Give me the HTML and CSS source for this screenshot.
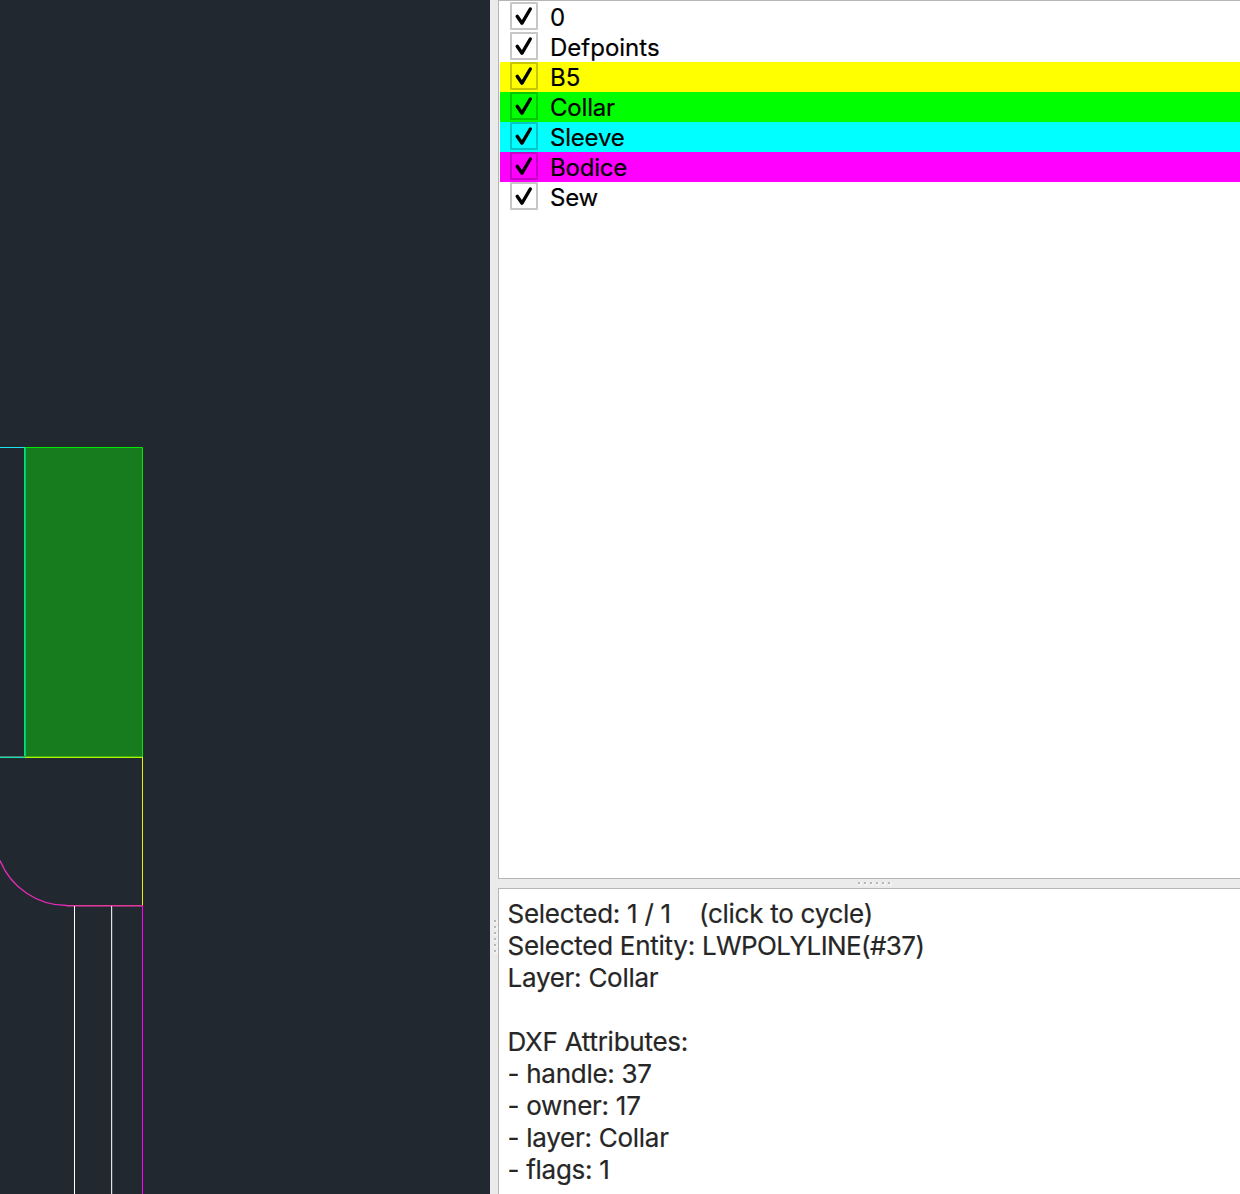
FILE: index.html
```html
<!DOCTYPE html>
<html lang="en">
<head>
<meta charset="utf-8">
<title>CAD Viewer</title>
<link rel="stylesheet" href="styles.css">
</head>
<body>
<main class="window">
  <svg class="canvas" viewBox="0 0 490 1194" fill="none">
    <rect x="25" y="448" width="118" height="309" fill="#167c1e"/>
    <path d="M0 447.5H25" stroke="#1ce5f3"/>
    <path d="M25 447.5H142.5V757" stroke="#00ea08"/>
    <path d="M24.5 448V757" stroke="#00e087"/>
    <path d="M25.5 448V757" stroke="#00c864"/>
    <path d="M0 756.5H25" stroke="#477f6e"/>
    <path d="M0 757.5H25" stroke="#18e1b4"/>
    <path d="M25 756.5H142" stroke="#3fa916"/>
    <path d="M25 757.5H142" stroke="#aef500"/>
    <path d="M142.5 757V905" stroke="#eeee00"/>
    <path d="M0 860.5A72.4 72.4 0 0 0 67 905.5" stroke="#e62bb6" stroke-width="1.3"/>
    <path d="M67 905.5H143" stroke="#e4369b"/>
    <path d="M67 906.5H143" stroke="#85336f"/>
    <path d="M74.5 906V1194" stroke="#fff"/>
    <path d="M111.5 906V1194" stroke="#e0e1e2"/>
    <path d="M112.5 906V1194" stroke="#474c52"/>
    <path d="M142.5 906V1194" stroke="#f0f"/>
  </svg>
  <div class="splitter splitter-v"><i></i><i></i><i></i><i></i><i></i><i></i></div>
  <div class="side">
    <ul class="layers">
      <li class="layer"><span class="check"><svg viewBox="0 0 28 28"><path d="M7.2 14.3L12 21.2L20.3 7"/></svg></span><span class="name">0</span></li>
      <li class="layer"><span class="check"><svg viewBox="0 0 28 28"><path d="M7.2 14.3L12 21.2L20.3 7"/></svg></span><span class="name">Defpoints</span></li>
      <li class="layer yellow"><span class="check"><svg viewBox="0 0 28 28"><path d="M7.2 14.3L12 21.2L20.3 7"/></svg></span><span class="name">B5</span></li>
      <li class="layer green"><span class="check"><svg viewBox="0 0 28 28"><path d="M7.2 14.3L12 21.2L20.3 7"/></svg></span><span class="name tight">Collar</span></li>
      <li class="layer cyan"><span class="check"><svg viewBox="0 0 28 28"><path d="M7.2 14.3L12 21.2L20.3 7"/></svg></span><span class="name tight">Sleeve</span></li>
      <li class="layer magenta"><span class="check"><svg viewBox="0 0 28 28"><path d="M7.2 14.3L12 21.2L20.3 7"/></svg></span><span class="name tight">Bodice</span></li>
      <li class="layer"><span class="check"><svg viewBox="0 0 28 28"><path d="M7.2 14.3L12 21.2L20.3 7"/></svg></span><span class="name tight">Sew</span></li>
    </ul>
    <div class="splitter splitter-h"><i></i><i></i><i></i><i></i><i></i><i></i></div>
    <div class="info">
      <p>Selected: 1 / 1    (click to cycle)</p>
      <p>Selected Entity: <span class="entity">LWPOLYLINE(#37)</span></p>
      <p>Layer: Collar</p>
      <p></p>
      <p>DXF Attributes:</p>
      <p>- handle: 37</p>
      <p>- owner: 17</p>
      <p>- layer: Collar</p>
      <p>- flags: 1</p>
    </div>
  </div>
</main>
</body>
</html>
```
FILE: styles.css
```css
* { box-sizing: border-box; }
body { margin: 0; font-family: Inter, "Liberation Sans", sans-serif; }
.window { display: flex; width: 1240px; height: 1194px; overflow: hidden; background: #ebebeb; }
.canvas { display: block; flex: none; width: 490px; height: 1194px; background: #222830; }
.splitter { display: flex; flex: none; gap: 4px; }
.splitter i { width: 2px; height: 2px; background: #b8b8b8; box-shadow: 1px 1px 0 1px #f2f2f2; }
.splitter-v { flex-direction: column; width: 8px; padding: 920px 0 0 4px; }
.splitter-h { height: 9px; padding: 3px 0 0 360px; }
.side { display: flex; flex-direction: column; flex: 1; min-width: 0; }
.layers { height: 879px; margin: 0; padding: 1px 0 0 1px; list-style: none; background: #fff; border: solid #b6b6b6; border-width: 1px 0 1px 1px; }
.layer { display: flex; align-items: center; height: 30px; padding-left: 10px; gap: 12px; font-size: 24px; line-height: 30px; color: #000; }
.yellow { background: #ff0; }
.green { background: #0f0; }
.cyan { background: #0ff; }
.magenta { background: #f0f; }
.check { width: 28px; height: 28px; margin-bottom: 2px; border: 2px solid rgba(0, 0, 0, .22); border-radius: 1px; }
.check svg { display: block; width: 28px; height: 28px; margin: -2px; fill: none; stroke: #000; stroke-width: 3.4; stroke-linecap: round; stroke-linejoin: round; }
.name { padding-top: 2px; white-space: pre; -webkit-text-stroke: .2px; }
.tight { letter-spacing: -.2px; }
.info { flex: 1; padding: 9px 0 0 8.5px; background: #fff; border: solid #b6b6b6; border-width: 1px 0 0 1px; font-size: 26px; line-height: 32px; letter-spacing: -.27px; color: #262626; -webkit-text-stroke: .2px; }
.info p { height: 32px; margin: 0; white-space: pre; }
.entity { letter-spacing: -.6px; }
```
